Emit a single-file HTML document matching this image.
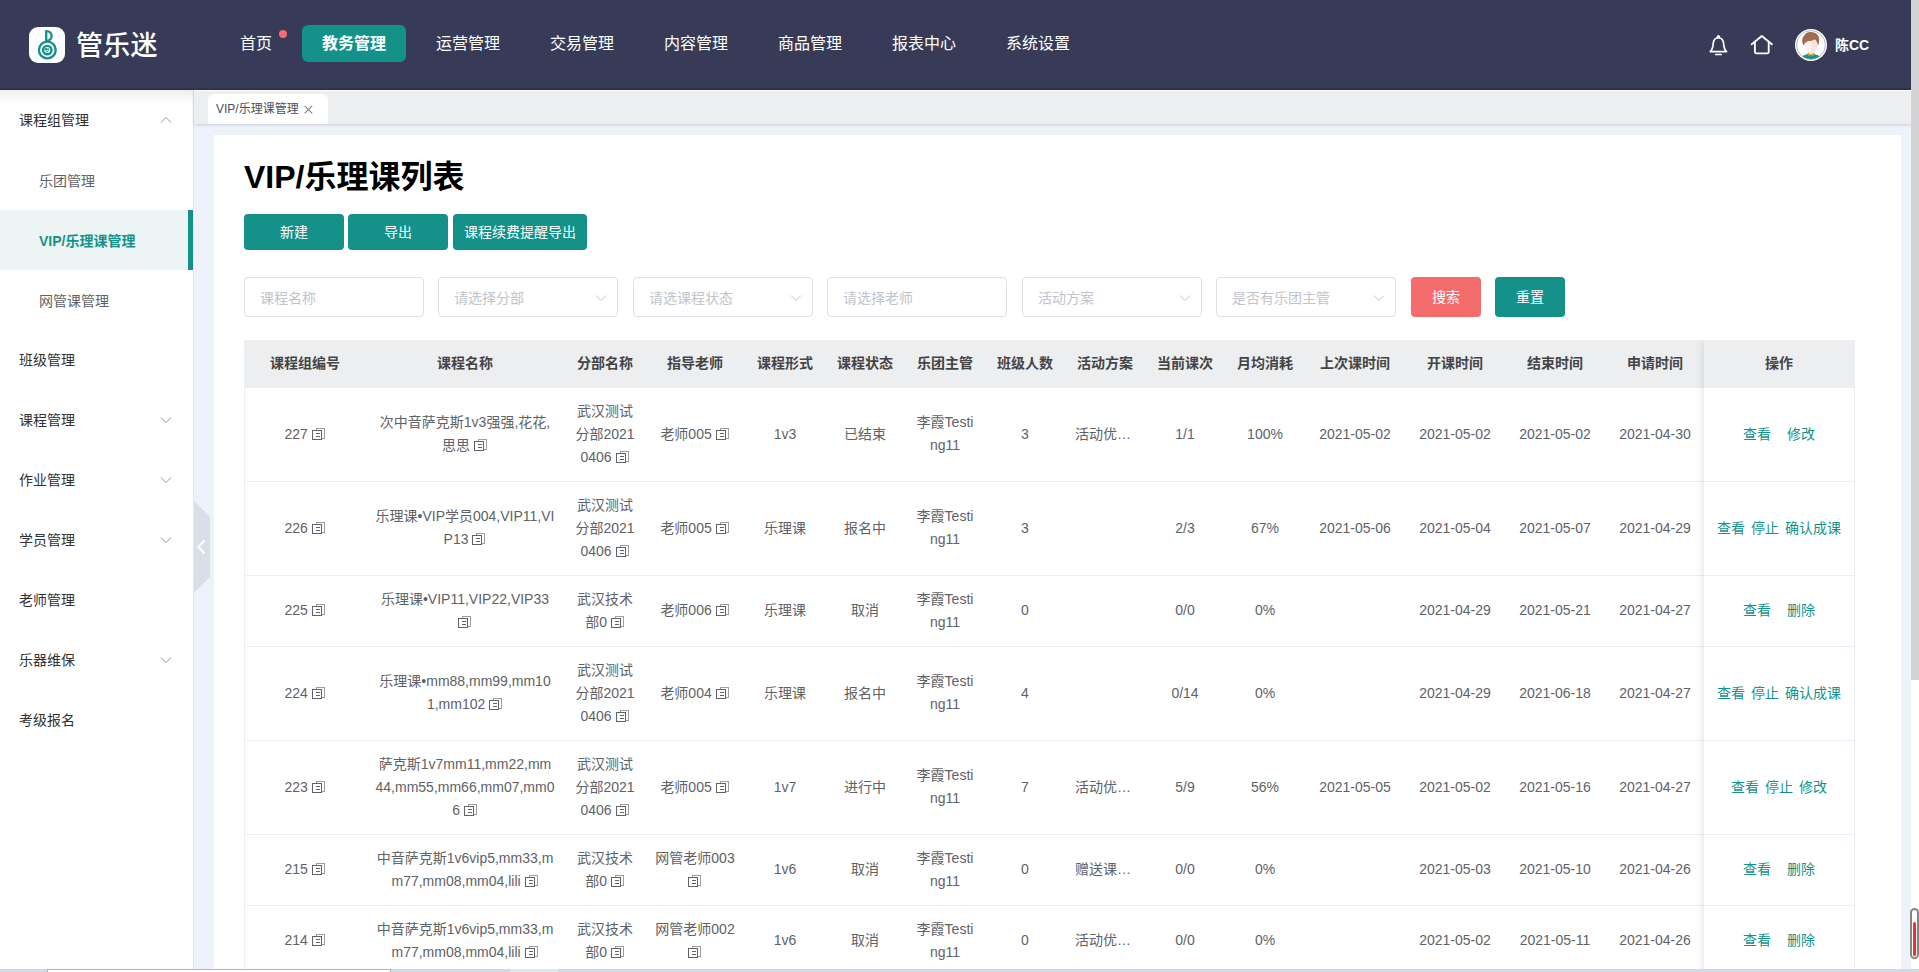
<!DOCTYPE html>
<html lang="zh-CN">
<head>
<meta charset="utf-8">
<title>VIP/乐理课管理</title>
<style>
*{box-sizing:border-box}
html,body{margin:0;padding:0}
body{width:1919px;height:972px;overflow:hidden;position:relative;background:#eef3fb;font-family:"Liberation Sans","Noto Sans CJK SC",sans-serif;font-size:14px;color:#606266;-webkit-font-smoothing:antialiased}
.abs{position:absolute}
/* header */
#hd{left:0;top:0;width:1911px;height:90px;background:#383b57;border-bottom:1px solid #2a2d48;box-shadow:0 -1px 1px rgba(42,45,72,.5) inset}
#logo{left:29px;top:27px;width:36px;height:36px;border-radius:9px;background:#fff}
#brand{left:76px;top:27.500px;font-size:27px;line-height:36px;color:#fff;font-weight:500;letter-spacing:.3px;white-space:nowrap}
.nav{top:25px;height:37px;line-height:37px;font-size:16px;color:#fff;text-align:center;width:104px;border-radius:6px;white-space:nowrap}
.nav.on{background:#14928a;font-weight:bold}
#dot{left:279px;top:30px;width:8px;height:8px;border-radius:50%;background:#f56c6c}
#uname{left:1835px;top:34px;line-height:22px;font-size:14px;font-weight:bold;color:#fff;white-space:nowrap}
/* sidebar */
#sb{left:0;top:90px;width:194px;height:882px;background:#fff;border-right:1px solid #e4e6ea}
#sbsh{left:0;top:90px;width:193px;height:14px;background:linear-gradient(#eeeeee,#fff)}
.mi{left:0;width:193px;height:60px;line-height:60px;font-size:14px;color:#303133;padding-left:19px;white-space:nowrap}
.mi.sub{padding-left:39px;color:#606266;line-height:62px}
.mi.act{background:#edf4f4;color:#14928a;font-weight:bold;border-right:5px solid #14928a}
.arr{position:absolute;left:160px;top:24px;width:12px;height:12px}
/* tabs */
#tabs{left:194px;top:90px;width:1717px;height:34px;background:#edeef0;border-top:1px solid #fff;box-shadow:0 1px 3px 0 rgba(0,0,0,.14),0 0 3px 0 rgba(0,0,0,.04)}
#tab{left:208px;top:94px;width:120px;height:30px;background:#fff;border-radius:6px 6px 0 0;font-size:12px;color:#495060;line-height:30px;padding-left:8px;white-space:nowrap}
/* content */
#panel{left:214px;top:135px;width:1687px;height:837px;background:#fff}
h1{position:absolute;left:244px;top:157px;margin:0;font-size:32px;line-height:40px;color:#000;font-weight:bold;white-space:nowrap}
.btn{position:absolute;height:36px;line-height:37px;overflow:hidden;border-radius:4px;background:#14928a;color:#fff;font-size:14px;text-align:center;white-space:nowrap}
.inp{position:absolute;top:277px;width:180px;height:40px;line-height:40px;border:1px solid #dcdfe6;border-radius:4px;background:#fff;color:#c0c4cc;font-size:14px;padding-left:15px;white-space:nowrap}
.inp svg{position:absolute;right:10px;top:13.500px;width:12px;height:12px}
/* table */
#tw{left:244px;top:340px;width:1611px;height:640px;overflow:hidden;border-left:1px solid #ebeef5;border-right:1px solid #ebeef5}
table.tb{border-collapse:separate;border-spacing:0;table-layout:fixed;width:1460px;font-size:14px;color:#606266}
.tb th{height:48px;background:#edeef0;color:#444;font-weight:bold;padding:0;border-bottom:1px solid #ebeef5;text-align:center}
.tb td{padding:12px 0;border-bottom:1px solid #ebeef5;text-align:center;vertical-align:middle;background:#fff}
.cell{padding:0 10px;line-height:23px;word-break:break-all}
.hu{position:relative;top:-.5px}
.ell{overflow:hidden;text-overflow:ellipsis;white-space:nowrap}
.cp{display:inline-block;width:14px;height:14px;vertical-align:-2px}
#fxw{left:1684px;top:340px;width:171px;height:640px;overflow:hidden;border-right:1px solid #ebeef5}
#fx{position:absolute;left:20px;top:0;width:150px;height:640px;box-shadow:0 0 10px rgba(0,0,0,.12);background:#fff}
table.fx{width:150px}
.lk{color:#14928a;display:inline-block}
.fx .cell{white-space:nowrap;padding:0}
</style>
</head>
<body>
<div id="sb" class="abs"></div>
<div id="sbsh" class="abs"></div>
<div id="tabs" class="abs"></div>
<div id="hd" class="abs"></div>
<div id="logo" class="abs"><svg width="36" height="36" viewBox="0 0 36 36" fill="none" stroke="#14928a" stroke-linecap="round"><circle cx="18.3" cy="23" r="8.4" stroke-width="2.4"/><circle cx="18.3" cy="23.100" r="4.200" stroke-width="2.400"/><circle cx="17.300" cy="22.300" r="1.400" fill="#14928a" stroke="none"/><path d="M19.700 21.700c.5 1.500-.4 2.900-2 3.100" stroke-width="1"/><path d="M17.200 14.400V4.200" stroke-width="2.300" stroke-linecap="butt"/><path d="M17.300 4.200c3.600 0 5.300 2.300 5.300 4.700 0 2.300-1.600 4.200-4.500 4.900" stroke-width="2.300"/></svg></div>
<div id="brand" class="abs">管乐迷</div>
<div class="abs nav" style="left:204px">首页</div>
<div id="dot" class="abs"></div>
<div class="abs nav on" style="left:302px">教务管理</div>
<div class="abs nav" style="left:416px">运营管理</div>
<div class="abs nav" style="left:530px">交易管理</div>
<div class="abs nav" style="left:644px">内容管理</div>
<div class="abs nav" style="left:758px">商品管理</div>
<div class="abs nav" style="left:872px">报表中心</div>
<div class="abs nav" style="left:986px">系统设置</div>
<svg class="abs" style="left:1708px;top:33px" width="22" height="24" viewBox="0 0 22 24" fill="none" stroke="#fff" stroke-width="1.650" stroke-linecap="round" stroke-linejoin="round"><path d="M2.200 18.600c2.300-1.700 2.700-4.300 3-8 .300-3.500 2.200-5.900 5.200-5.900s4.900 2.400 5.200 5.900c.3 3.700.7 6.300 3 8z"/><path d="M9.400 4.700c-.2-2.400 2.200-2.400 2 0"/><path d="M7.600 21.500h5.600"/></svg>
<svg class="abs" style="left:1750px;top:34px" width="24" height="22" viewBox="0 0 24 22" fill="none" stroke="#fff" stroke-width="1.850" stroke-linecap="round" stroke-linejoin="round"><path d="M1.700 10.300L11.800 2l10.100 8.300"/><path d="M4.900 8.200v9.900c0 .8.400 1.200 1.200 1.200h11.400c.8 0 1.200-.4 1.200-1.200V8.200"/></svg>
<svg class="abs" style="left:1795px;top:29px" width="32" height="32" viewBox="0 0 32 32"><defs><clipPath id="avc"><circle cx="16" cy="16" r="14.100"/></clipPath></defs><circle cx="16" cy="16" r="16" fill="#fff"/><circle cx="16" cy="16" r="14.400" fill="#fff" stroke="#9a9aa5" stroke-width=".700"/><g clip-path="url(#avc)"><path d="M5 32c0-4.500 4.500-7 11-7s11 2.500 11 7z" fill="#14928a"/><path d="M12.300 24.300l1.700 3.200 2-2.100 2 2.100 1.700-3.200-1.500-1.300h-4.400z" fill="#e0a020"/><path d="M13.800 21h4.400v3.200l-2.200 1.600-2.200-1.600z" fill="#fbe3dc"/><ellipse cx="16.200" cy="16.300" rx="6.300" ry="7.600" fill="#fdf1ee"/><path d="M16.200 8.700v15.200c3.500 0 6.300-3.400 6.300-7.600s-2.800-7.600-6.300-7.600z" fill="#fbe4dd"/><path d="M8.800 16.500c-2.400-3-2-8.500.8-10.500 1-2.300 5-3.800 8-2.700 3 .2 5.800 2.300 6.300 5.500.7 2.600.3 5.600-1 7.700-.2-2.500-1.300-5-3.200-6.300-1.700 1.300-4.300 2-6.300 1.800-2.600.8-4.200 2.500-4.600 4.500z" fill="#a56b50"/></g></svg>
<div id="uname" class="abs">陈CC</div>

<!-- sidebar items -->
<div class="abs mi" style="top:90px">课程组管理<svg class="arr" viewBox="0 0 12 12"><path d="M1 8.500l5-5 5 5" fill="none" stroke="#909399" stroke-width="1"/></svg></div>
<div class="abs mi sub" style="top:150px">乐团管理</div>
<div class="abs mi sub act" style="top:210px">VIP/乐理课管理</div>
<div class="abs mi sub" style="top:270px">网管课管理</div>
<div class="abs mi" style="top:330px">班级管理</div>
<div class="abs mi" style="top:390px">课程管理<svg class="arr" viewBox="0 0 12 12"><path d="M1 3.500l5 5 5-5" fill="none" stroke="#909399" stroke-width="1"/></svg></div>
<div class="abs mi" style="top:450px">作业管理<svg class="arr" viewBox="0 0 12 12"><path d="M1 3.500l5 5 5-5" fill="none" stroke="#909399" stroke-width="1"/></svg></div>
<div class="abs mi" style="top:510px">学员管理<svg class="arr" viewBox="0 0 12 12"><path d="M1 3.500l5 5 5-5" fill="none" stroke="#909399" stroke-width="1"/></svg></div>
<div class="abs mi" style="top:570px">老师管理</div>
<div class="abs mi" style="top:630px">乐器维保<svg class="arr" viewBox="0 0 12 12"><path d="M1 3.500l5 5 5-5" fill="none" stroke="#909399" stroke-width="1"/></svg></div>
<div class="abs mi" style="top:690px">考级报名</div>

<!-- tabs -->
<div id="tab" class="abs">VIP/乐理课管理<svg style="position:absolute;left:96px;top:11px" width="9" height="9" viewBox="0 0 9 9"><path d="M.6.800l7.600 7.600M8.200.800l-7.600 7.600" stroke="#7c828f" stroke-width="1.150" fill="none"/></svg></div>

<!-- collapse handle -->
<svg class="abs" style="left:194px;top:501px" width="16" height="92" viewBox="0 0 16 92"><path d="M0 0l16 16v60L0 92z" fill="#d8dfe8"/><path d="M10.500 39.500l-6 6.500 6 6.500" fill="none" stroke="#fff" stroke-width="2.200"/></svg>

<div id="panel" class="abs"></div>
<h1>VIP/乐理课列表</h1>
<div class="btn" style="left:244px;top:214px;width:100px">新建</div>
<div class="btn" style="left:348px;top:214px;width:100px">导出</div>
<div class="btn" style="left:453px;top:214px;width:134px">课程续费提醒导出</div>

<div class="inp" style="left:244px">课程名称</div>
<div class="inp" style="left:438px">请选择分部<svg viewBox="0 0 12 12"><path d="M1 3.500l5 5 5-5" fill="none" stroke="#c0c4cc" stroke-width="1"/></svg></div>
<div class="inp" style="left:633px">请选课程状态<svg viewBox="0 0 12 12"><path d="M1 3.500l5 5 5-5" fill="none" stroke="#c0c4cc" stroke-width="1"/></svg></div>
<div class="inp" style="left:827px">请选择老师</div>
<div class="inp" style="left:1022px">活动方案<svg viewBox="0 0 12 12"><path d="M1 3.500l5 5 5-5" fill="none" stroke="#c0c4cc" stroke-width="1"/></svg></div>
<div class="inp" style="left:1216px">是否有乐团主管<svg viewBox="0 0 12 12"><path d="M1 3.500l5 5 5-5" fill="none" stroke="#c0c4cc" stroke-width="1"/></svg></div>
<div class="btn" style="left:1411px;top:277px;width:70px;height:40px;line-height:40px;background:#f56c6c">搜索</div>
<div class="btn" style="left:1495px;top:277px;width:70px;height:40px;line-height:40px">重置</div>

<div id="tw" class="abs">
<table class="tb"><colgroup>
<col style="width:120px">
<col style="width:200px">
<col style="width:80px">
<col style="width:100px">
<col style="width:80px">
<col style="width:80px">
<col style="width:80px">
<col style="width:80px">
<col style="width:80px">
<col style="width:80px">
<col style="width:80px">
<col style="width:100px">
<col style="width:100px">
<col style="width:100px">
<col style="width:100px">
</colgroup><thead><tr>
<th><div class="cell">课程组编号</div></th>
<th><div class="cell">课程名称</div></th>
<th><div class="cell">分部名称</div></th>
<th><div class="cell">指导老师</div></th>
<th><div class="cell">课程形式</div></th>
<th><div class="cell">课程状态</div></th>
<th><div class="cell">乐团主管</div></th>
<th><div class="cell">班级人数</div></th>
<th><div class="cell">活动方案</div></th>
<th><div class="cell">当前课次</div></th>
<th><div class="cell">月均消耗</div></th>
<th><div class="cell">上次课时间</div></th>
<th><div class="cell">开课时间</div></th>
<th><div class="cell">结束时间</div></th>
<th><div class="cell">申请时间</div></th>
</tr></thead><tbody>
<tr>
<td><div class="cell">227 <svg class="cp" viewBox="0 0 14 14" shape-rendering="crispEdges" fill="none" stroke="currentColor" stroke-width="1"><path d="M0.9 3.6h9v8.7h-9z M3.5 6.6h4 M3.5 9.2h4"/><path d="M4.1 3.4v-2.2h8.3v10.1h-2.4" stroke-opacity=".62"/></svg></div></td>
<td><div class="cell hu">次中音萨克斯1v3强强,花花,思思 <svg class="cp" viewBox="0 0 14 14" shape-rendering="crispEdges" fill="none" stroke="currentColor" stroke-width="1"><path d="M0.9 3.6h9v8.7h-9z M3.5 6.6h4 M3.5 9.2h4"/><path d="M4.1 3.4v-2.2h8.3v10.1h-2.4" stroke-opacity=".62"/></svg></div></td>
<td><div class="cell">武汉测试分部20210406 <svg class="cp" viewBox="0 0 14 14" shape-rendering="crispEdges" fill="none" stroke="currentColor" stroke-width="1"><path d="M0.9 3.6h9v8.7h-9z M3.5 6.6h4 M3.5 9.2h4"/><path d="M4.1 3.4v-2.2h8.3v10.1h-2.4" stroke-opacity=".62"/></svg></div></td>
<td><div class="cell">老师005 <svg class="cp" viewBox="0 0 14 14" shape-rendering="crispEdges" fill="none" stroke="currentColor" stroke-width="1"><path d="M0.9 3.6h9v8.7h-9z M3.5 6.6h4 M3.5 9.2h4"/><path d="M4.1 3.4v-2.2h8.3v10.1h-2.4" stroke-opacity=".62"/></svg></div></td>
<td><div class="cell">1v3</div></td>
<td><div class="cell">已结束</div></td>
<td><div class="cell hu">李霞Testing11</div></td>
<td><div class="cell">3</div></td>
<td><div class="cell"><div class="ell">活动优惠方案</div></div></td>
<td><div class="cell">1/1</div></td>
<td><div class="cell">100%</div></td>
<td><div class="cell">2021-05-02</div></td>
<td><div class="cell">2021-05-02</div></td>
<td><div class="cell">2021-05-02</div></td>
<td><div class="cell">2021-04-30</div></td>
</tr>
<tr>
<td><div class="cell">226 <svg class="cp" viewBox="0 0 14 14" shape-rendering="crispEdges" fill="none" stroke="currentColor" stroke-width="1"><path d="M0.9 3.6h9v8.7h-9z M3.5 6.6h4 M3.5 9.2h4"/><path d="M4.1 3.4v-2.2h8.3v10.1h-2.4" stroke-opacity=".62"/></svg></div></td>
<td><div class="cell hu">乐理课•VIP学员004,VIP11,VIP13 <svg class="cp" viewBox="0 0 14 14" shape-rendering="crispEdges" fill="none" stroke="currentColor" stroke-width="1"><path d="M0.9 3.6h9v8.7h-9z M3.5 6.6h4 M3.5 9.2h4"/><path d="M4.1 3.4v-2.2h8.3v10.1h-2.4" stroke-opacity=".62"/></svg></div></td>
<td><div class="cell">武汉测试分部20210406 <svg class="cp" viewBox="0 0 14 14" shape-rendering="crispEdges" fill="none" stroke="currentColor" stroke-width="1"><path d="M0.9 3.6h9v8.7h-9z M3.5 6.6h4 M3.5 9.2h4"/><path d="M4.1 3.4v-2.2h8.3v10.1h-2.4" stroke-opacity=".62"/></svg></div></td>
<td><div class="cell">老师005 <svg class="cp" viewBox="0 0 14 14" shape-rendering="crispEdges" fill="none" stroke="currentColor" stroke-width="1"><path d="M0.9 3.6h9v8.7h-9z M3.5 6.6h4 M3.5 9.2h4"/><path d="M4.1 3.4v-2.2h8.3v10.1h-2.4" stroke-opacity=".62"/></svg></div></td>
<td><div class="cell">乐理课</div></td>
<td><div class="cell">报名中</div></td>
<td><div class="cell hu">李霞Testing11</div></td>
<td><div class="cell">3</div></td>
<td><div class="cell hu"><div class="ell"></div></div></td>
<td><div class="cell">2/3</div></td>
<td><div class="cell">67%</div></td>
<td><div class="cell">2021-05-06</div></td>
<td><div class="cell">2021-05-04</div></td>
<td><div class="cell">2021-05-07</div></td>
<td><div class="cell">2021-04-29</div></td>
</tr>
<tr>
<td><div class="cell hu">225 <svg class="cp" viewBox="0 0 14 14" shape-rendering="crispEdges" fill="none" stroke="currentColor" stroke-width="1"><path d="M0.9 3.6h9v8.7h-9z M3.5 6.6h4 M3.5 9.2h4"/><path d="M4.1 3.4v-2.2h8.3v10.1h-2.4" stroke-opacity=".62"/></svg></div></td>
<td><div class="cell">乐理课•VIP11,VIP22,VIP33 <svg class="cp" viewBox="0 0 14 14" shape-rendering="crispEdges" fill="none" stroke="currentColor" stroke-width="1"><path d="M0.9 3.6h9v8.7h-9z M3.5 6.6h4 M3.5 9.2h4"/><path d="M4.1 3.4v-2.2h8.3v10.1h-2.4" stroke-opacity=".62"/></svg></div></td>
<td><div class="cell">武汉技术部0 <svg class="cp" viewBox="0 0 14 14" shape-rendering="crispEdges" fill="none" stroke="currentColor" stroke-width="1"><path d="M0.9 3.6h9v8.7h-9z M3.5 6.6h4 M3.5 9.2h4"/><path d="M4.1 3.4v-2.2h8.3v10.1h-2.4" stroke-opacity=".62"/></svg></div></td>
<td><div class="cell hu">老师006 <svg class="cp" viewBox="0 0 14 14" shape-rendering="crispEdges" fill="none" stroke="currentColor" stroke-width="1"><path d="M0.9 3.6h9v8.7h-9z M3.5 6.6h4 M3.5 9.2h4"/><path d="M4.1 3.4v-2.2h8.3v10.1h-2.4" stroke-opacity=".62"/></svg></div></td>
<td><div class="cell hu">乐理课</div></td>
<td><div class="cell hu">取消</div></td>
<td><div class="cell">李霞Testing11</div></td>
<td><div class="cell hu">0</div></td>
<td><div class="cell"><div class="ell"></div></div></td>
<td><div class="cell hu">0/0</div></td>
<td><div class="cell hu">0%</div></td>
<td><div class="cell"></div></td>
<td><div class="cell hu">2021-04-29</div></td>
<td><div class="cell hu">2021-05-21</div></td>
<td><div class="cell hu">2021-04-27</div></td>
</tr>
<tr>
<td><div class="cell">224 <svg class="cp" viewBox="0 0 14 14" shape-rendering="crispEdges" fill="none" stroke="currentColor" stroke-width="1"><path d="M0.9 3.6h9v8.7h-9z M3.5 6.6h4 M3.5 9.2h4"/><path d="M4.1 3.4v-2.2h8.3v10.1h-2.4" stroke-opacity=".62"/></svg></div></td>
<td><div class="cell hu">乐理课•mm88,mm99,mm101,mm102 <svg class="cp" viewBox="0 0 14 14" shape-rendering="crispEdges" fill="none" stroke="currentColor" stroke-width="1"><path d="M0.9 3.6h9v8.7h-9z M3.5 6.6h4 M3.5 9.2h4"/><path d="M4.1 3.4v-2.2h8.3v10.1h-2.4" stroke-opacity=".62"/></svg></div></td>
<td><div class="cell">武汉测试分部20210406 <svg class="cp" viewBox="0 0 14 14" shape-rendering="crispEdges" fill="none" stroke="currentColor" stroke-width="1"><path d="M0.9 3.6h9v8.7h-9z M3.5 6.6h4 M3.5 9.2h4"/><path d="M4.1 3.4v-2.2h8.3v10.1h-2.4" stroke-opacity=".62"/></svg></div></td>
<td><div class="cell">老师004 <svg class="cp" viewBox="0 0 14 14" shape-rendering="crispEdges" fill="none" stroke="currentColor" stroke-width="1"><path d="M0.9 3.6h9v8.7h-9z M3.5 6.6h4 M3.5 9.2h4"/><path d="M4.1 3.4v-2.2h8.3v10.1h-2.4" stroke-opacity=".62"/></svg></div></td>
<td><div class="cell">乐理课</div></td>
<td><div class="cell">报名中</div></td>
<td><div class="cell hu">李霞Testing11</div></td>
<td><div class="cell">4</div></td>
<td><div class="cell hu"><div class="ell"></div></div></td>
<td><div class="cell">0/14</div></td>
<td><div class="cell">0%</div></td>
<td><div class="cell hu"></div></td>
<td><div class="cell">2021-04-29</div></td>
<td><div class="cell">2021-06-18</div></td>
<td><div class="cell">2021-04-27</div></td>
</tr>
<tr>
<td><div class="cell">223 <svg class="cp" viewBox="0 0 14 14" shape-rendering="crispEdges" fill="none" stroke="currentColor" stroke-width="1"><path d="M0.9 3.6h9v8.7h-9z M3.5 6.6h4 M3.5 9.2h4"/><path d="M4.1 3.4v-2.2h8.3v10.1h-2.4" stroke-opacity=".62"/></svg></div></td>
<td><div class="cell">萨克斯1v7mm11,mm22,mm44,mm55,mm66,mm07,mm06 <svg class="cp" viewBox="0 0 14 14" shape-rendering="crispEdges" fill="none" stroke="currentColor" stroke-width="1"><path d="M0.9 3.6h9v8.7h-9z M3.5 6.6h4 M3.5 9.2h4"/><path d="M4.1 3.4v-2.2h8.3v10.1h-2.4" stroke-opacity=".62"/></svg></div></td>
<td><div class="cell">武汉测试分部20210406 <svg class="cp" viewBox="0 0 14 14" shape-rendering="crispEdges" fill="none" stroke="currentColor" stroke-width="1"><path d="M0.9 3.6h9v8.7h-9z M3.5 6.6h4 M3.5 9.2h4"/><path d="M4.1 3.4v-2.2h8.3v10.1h-2.4" stroke-opacity=".62"/></svg></div></td>
<td><div class="cell">老师005 <svg class="cp" viewBox="0 0 14 14" shape-rendering="crispEdges" fill="none" stroke="currentColor" stroke-width="1"><path d="M0.9 3.6h9v8.7h-9z M3.5 6.6h4 M3.5 9.2h4"/><path d="M4.1 3.4v-2.2h8.3v10.1h-2.4" stroke-opacity=".62"/></svg></div></td>
<td><div class="cell">1v7</div></td>
<td><div class="cell">进行中</div></td>
<td><div class="cell hu">李霞Testing11</div></td>
<td><div class="cell">7</div></td>
<td><div class="cell"><div class="ell">活动优惠方案</div></div></td>
<td><div class="cell">5/9</div></td>
<td><div class="cell">56%</div></td>
<td><div class="cell">2021-05-05</div></td>
<td><div class="cell">2021-05-02</div></td>
<td><div class="cell">2021-05-16</div></td>
<td><div class="cell">2021-04-27</div></td>
</tr>
<tr>
<td><div class="cell hu">215 <svg class="cp" viewBox="0 0 14 14" shape-rendering="crispEdges" fill="none" stroke="currentColor" stroke-width="1"><path d="M0.9 3.6h9v8.7h-9z M3.5 6.6h4 M3.5 9.2h4"/><path d="M4.1 3.4v-2.2h8.3v10.1h-2.4" stroke-opacity=".62"/></svg></div></td>
<td><div class="cell">中音萨克斯1v6vip5,mm33,mm77,mm08,mm04,lili <svg class="cp" viewBox="0 0 14 14" shape-rendering="crispEdges" fill="none" stroke="currentColor" stroke-width="1"><path d="M0.9 3.6h9v8.7h-9z M3.5 6.6h4 M3.5 9.2h4"/><path d="M4.1 3.4v-2.2h8.3v10.1h-2.4" stroke-opacity=".62"/></svg></div></td>
<td><div class="cell">武汉技术部0 <svg class="cp" viewBox="0 0 14 14" shape-rendering="crispEdges" fill="none" stroke="currentColor" stroke-width="1"><path d="M0.9 3.6h9v8.7h-9z M3.5 6.6h4 M3.5 9.2h4"/><path d="M4.1 3.4v-2.2h8.3v10.1h-2.4" stroke-opacity=".62"/></svg></div></td>
<td><div class="cell">网管老师003 <svg class="cp" viewBox="0 0 14 14" shape-rendering="crispEdges" fill="none" stroke="currentColor" stroke-width="1"><path d="M0.9 3.6h9v8.7h-9z M3.5 6.6h4 M3.5 9.2h4"/><path d="M4.1 3.4v-2.2h8.3v10.1h-2.4" stroke-opacity=".62"/></svg></div></td>
<td><div class="cell hu">1v6</div></td>
<td><div class="cell hu">取消</div></td>
<td><div class="cell">李霞Testing11</div></td>
<td><div class="cell hu">0</div></td>
<td><div class="cell hu"><div class="ell">赠送课时活动</div></div></td>
<td><div class="cell hu">0/0</div></td>
<td><div class="cell hu">0%</div></td>
<td><div class="cell"></div></td>
<td><div class="cell hu">2021-05-03</div></td>
<td><div class="cell hu">2021-05-10</div></td>
<td><div class="cell hu">2021-04-26</div></td>
</tr>
<tr>
<td><div class="cell hu">214 <svg class="cp" viewBox="0 0 14 14" shape-rendering="crispEdges" fill="none" stroke="currentColor" stroke-width="1"><path d="M0.9 3.6h9v8.7h-9z M3.5 6.6h4 M3.5 9.2h4"/><path d="M4.1 3.4v-2.2h8.3v10.1h-2.4" stroke-opacity=".62"/></svg></div></td>
<td><div class="cell">中音萨克斯1v6vip5,mm33,mm77,mm08,mm04,lili <svg class="cp" viewBox="0 0 14 14" shape-rendering="crispEdges" fill="none" stroke="currentColor" stroke-width="1"><path d="M0.9 3.6h9v8.7h-9z M3.5 6.6h4 M3.5 9.2h4"/><path d="M4.1 3.4v-2.2h8.3v10.1h-2.4" stroke-opacity=".62"/></svg></div></td>
<td><div class="cell">武汉技术部0 <svg class="cp" viewBox="0 0 14 14" shape-rendering="crispEdges" fill="none" stroke="currentColor" stroke-width="1"><path d="M0.9 3.6h9v8.7h-9z M3.5 6.6h4 M3.5 9.2h4"/><path d="M4.1 3.4v-2.2h8.3v10.1h-2.4" stroke-opacity=".62"/></svg></div></td>
<td><div class="cell">网管老师002 <svg class="cp" viewBox="0 0 14 14" shape-rendering="crispEdges" fill="none" stroke="currentColor" stroke-width="1"><path d="M0.9 3.6h9v8.7h-9z M3.5 6.6h4 M3.5 9.2h4"/><path d="M4.1 3.4v-2.2h8.3v10.1h-2.4" stroke-opacity=".62"/></svg></div></td>
<td><div class="cell hu">1v6</div></td>
<td><div class="cell hu">取消</div></td>
<td><div class="cell">李霞Testing11</div></td>
<td><div class="cell hu">0</div></td>
<td><div class="cell hu"><div class="ell">活动优惠方案</div></div></td>
<td><div class="cell hu">0/0</div></td>
<td><div class="cell hu">0%</div></td>
<td><div class="cell"></div></td>
<td><div class="cell hu">2021-05-02</div></td>
<td><div class="cell hu">2021-05-11</div></td>
<td><div class="cell hu">2021-04-26</div></td>
</tr>
</tbody></table>
</div>
<div id="fxw" class="abs"><div id="fx">
<table class="tb fx"><colgroup><col style="width:150px"></colgroup><thead><tr><th><div class="cell">操作</div></th></tr></thead><tbody>
<tr><td style="height:94px"><div class="cell"><span class="lk" style="margin-left:0px">查看</span><span class="lk" style="margin-left:16px">修改</span></div></td></tr>
<tr><td style="height:94px"><div class="cell"><span class="lk" style="margin-left:0px">查看</span><span class="lk" style="margin-left:6px">停止</span><span class="lk" style="margin-left:6px">确认成课</span></div></td></tr>
<tr><td style="height:71px"><div class="cell hu"><span class="lk" style="margin-left:0px">查看</span><span class="lk" style="margin-left:16px">删除</span></div></td></tr>
<tr><td style="height:94px"><div class="cell"><span class="lk" style="margin-left:0px">查看</span><span class="lk" style="margin-left:6px">停止</span><span class="lk" style="margin-left:6px">确认成课</span></div></td></tr>
<tr><td style="height:94px"><div class="cell"><span class="lk" style="margin-left:0px">查看</span><span class="lk" style="margin-left:6px">停止</span><span class="lk" style="margin-left:6px">修改</span></div></td></tr>
<tr><td style="height:71px"><div class="cell hu"><span class="lk" style="margin-left:0px">查看</span><span class="lk" style="margin-left:16px">删除</span></div></td></tr>
<tr><td style="height:71px"><div class="cell hu"><span class="lk" style="margin-left:0px">查看</span><span class="lk" style="margin-left:16px">删除</span></div></td></tr>
</tbody></table>
</div></div>

<!-- right scrollbar -->
<div class="abs" style="left:1911px;top:0;width:8px;height:972px;background:#fff"></div>
<div class="abs" style="left:1911px;top:0;width:8px;height:680px;background:#d3d3d3"></div>
<div class="abs" style="left:1910px;top:908px;width:9px;height:51px;border:2px solid #858585;border-radius:5px;background:#fff"></div>
<div class="abs" style="left:1913px;top:922px;width:3px;height:34px;border-radius:2px;background:#ef3030"></div>
<!-- bottom strip -->
<div class="abs" style="left:0;top:969px;width:1919px;height:3px;background:#c9dde4"></div>
<div class="abs" style="left:510px;top:969px;width:48px;height:3px;background:#dfeaee"></div>
<div class="abs" style="left:47px;top:969px;width:344px;height:3px;background:#fff;border:1px solid #b4b4b4;border-bottom:0"></div>
</body>
</html>
